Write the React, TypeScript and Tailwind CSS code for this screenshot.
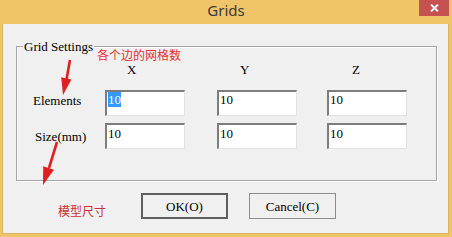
import React from "react";

function Edit({ selected = false, row2 = false }: { selected?: boolean; row2?: boolean }) {
  return (
    <div
      className={
        "w-[80px] h-[26px] bg-white border-l-2 border-t-2 border-r border-b border-l-[#7d7d7d] border-t-[#7d7d7d] border-r-[#e2e2e2] border-b-[#e2e2e2] pl-px text-[13px] leading-[13px] text-black " +
        (row2 ? "pt-[2px]" : "pt-px")
      }
    >
      {selected ? <span className="bg-[#3399ff] text-white">10</span> : <span>10</span>}
    </div>
  );
}

export default function App() {
  return (
    <div className="relative w-[452px] h-[237px] bg-[#f0c56a] flex flex-col font-['Liberation_Serif','Times_New_Roman',serif] text-black overflow-hidden">
      {/* title bar */}
      <div className="relative h-[24px] shrink-0 flex justify-center">
        <span className="font-['Noto_Sans','Open_Sans',sans-serif] text-[15px] leading-[20px] text-[#3a3a3a]">
          Grids
        </span>
        <div className="absolute right-[3px] top-0 w-[30px] h-[16px] bg-[#c75050] flex items-center justify-center">
          <svg width="9" height="8" viewBox="0 0 9 8">
            <path d="M1 0.5 L8 7.5 M8 0.5 L1 7.5" stroke="#ffffff" strokeWidth="1.8" />
          </svg>
        </div>
      </div>

      {/* client area */}
      <div className="ml-[2px] mr-[3px] h-[210px] bg-[#f0f0f0] border border-[#dab35f] border-t-0 flex flex-col">
        {/* group box */}
        <div className="relative mt-[22px] ml-[13px] w-[421px] h-[135px] border border-[#a6a6a6] shadow-[inset_1px_1px_0_#ffffff,1px_1px_0_#ffffff] pt-[15px] pl-[16px]">
          <span className="absolute left-[6px] top-[-8px] px-[1px] bg-[#f0f0f0] text-[13px] leading-[15px]">
            Grid Settings
          </span>

          {/* header row */}
          <div className="grid grid-cols-[72px_112px_110px_80px] h-[15px] text-[13px] leading-[15px]">
            <div />
            <div className="pl-[22px]">X</div>
            <div className="pl-[23px]">Y</div>
            <div className="pl-[25px]">Z</div>
          </div>

          {/* row 1 */}
          <div className="grid grid-cols-[72px_112px_110px_80px] mt-[13px] text-[13px] leading-[15px]">
            <div className="pt-[3px]">Elements</div>
            <div>
              <Edit selected />
            </div>
            <div>
              <Edit />
            </div>
            <div>
              <Edit />
            </div>
          </div>

          {/* row 2 */}
          <div className="grid grid-cols-[72px_112px_110px_80px] mt-[7px] text-[13px] leading-[15px]">
            <div className="pt-[6px] pl-[2px]">Size(mm)</div>
            <div>
              <Edit row2 />
            </div>
            <div>
              <Edit row2 />
            </div>
            <div>
              <Edit row2 />
            </div>
          </div>
        </div>

        {/* buttons */}
        <div className="flex gap-[21px] mt-[12px] pl-[138px]">
          <button className="w-[87px] h-[26px] border-2 border-[#5f5f5f] bg-[#f0f0f0] text-[13px] leading-[15px] flex items-center justify-center">
            OK(O)
          </button>
          <button className="w-[87px] h-[26px] border border-[#8c8c8c] bg-[#f0f0f0] text-[13px] leading-[15px] flex items-center justify-center">
            Cancel(C)
          </button>
        </div>
      </div>
      <div className="h-[3px]" />

      {/* annotations (overlay on the screenshot) */}
      <span className="absolute left-[97px] top-[48px] font-['Noto_Sans_CJK_SC','Noto_Sans',sans-serif] text-[12px] leading-[14px] text-[#e23030]">
        各个边的网格数
      </span>
      <span className="absolute left-[58px] top-[204px] font-['Noto_Sans_CJK_SC','Noto_Sans',sans-serif] text-[12px] leading-[14px] text-[#c83232]">
        模型尺寸
      </span>
      <svg className="absolute left-0 top-0 pointer-events-none" width="452" height="237" viewBox="0 0 452 237">
        <line x1="70" y1="60" x2="66.6" y2="79" stroke="#e02020" strokeWidth="2.6" />
        <polygon points="71.4,79.4 61.2,77.3 63,95" fill="#e02020" />
        <line x1="57" y1="142" x2="49" y2="168" stroke="#e02020" strokeWidth="2.6" />
        <polygon points="54,169.8 43.2,166.2 43,185" fill="#e02020" />
      </svg>
    </div>
  );
}
